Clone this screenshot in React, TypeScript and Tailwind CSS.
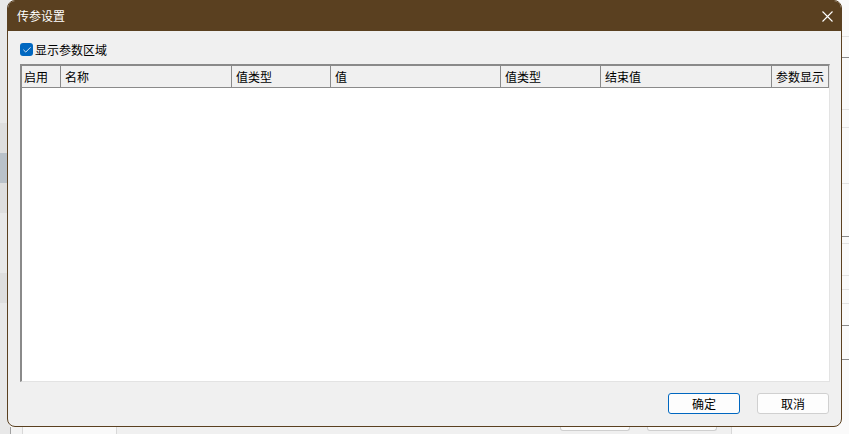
import { Check } from 'lucide-react';

const cols = [
  { label: '启用', w: 'w-[39px]', pad: 'pl-[2px]' },
  { label: '名称', w: 'w-[171px]', pad: 'pl-[4px]' },
  { label: '值类型', w: 'w-[99px]', pad: 'pl-[4px]' },
  { label: '值', w: 'w-[170px]', pad: 'pl-[4px]' },
  { label: '值类型', w: 'w-[100px]', pad: 'pl-[4px]' },
  { label: '结束值', w: 'w-[171px]', pad: 'pl-[4px]' },
  { label: '参数显示', w: 'w-[57px]', pad: 'pl-[4px]' },
];

const BackLeft = () => (
  <div className="flex w-[10px] flex-col bg-[#e8e8e8]">
    <div className="h-[123px]" />
    <div className="h-[30px] bg-[#dedede]" />
    <div className="h-[30px] bg-[#b9c1c9]" />
    <div className="h-[30px] bg-[#dedede]" />
    <div className="h-[60px]" />
    <div className="h-[30px] bg-[#dedede]" />
    <div className="flex-1" />
  </div>
);

const BackRight = () => (
  <div className="flex w-[12px] flex-col bg-[#fafafa]">
    <div className="h-[37px] border-b border-[#e3e3e3]" />
    <div className="h-[21px] border-b border-[#8a8a8a]" />
    <div className="h-[52px] border-b border-[#e3e3e3]" />
    <div className="h-[18px] border-b border-[#e3e3e3]" />
    <div className="h-[56px] border-b border-[#e3e3e3]" />
    <div className="h-[53px] border-b border-[#8a8a8a]" />
    <div className="h-[7px] border-b border-[#e3e3e3]" />
    <div className="h-[32px] border-b border-[#e3e3e3]" />
    <div className="h-[14px] border-b border-[#e3e3e3]" />
    <div className="h-[14px] border-b border-[#e3e3e3]" />
    <div className="h-[22px] border-b border-[#8a8a8a]" />
    <div className="h-[34px] border-b border-[#8a8a8a]" />
    <div className="flex-1" />
  </div>
);

const BackBottom = () => (
  <div className="flex h-[7px] items-stretch">
    <div className="w-[10px] bg-[#e8e8e8]" />
    <div className="w-[12px] border-l border-[#a0a0a0] bg-[#f3f3f3]" />
    <div className="w-[94px] border-l border-[#d8d8d8] bg-[#f9f9f9]" />
    <div className="flex w-[615px] items-start gap-[17px] border-l border-[#d8d8d8] bg-[#f0f0f0] pl-[443px]">
      <div className="h-[4px] w-[70px] rounded-b-[3px] border border-t-0 border-[#cfcfcf] bg-[#fbfbfb]" />
      <div className="h-[4px] w-[70px] rounded-b-[3px] border border-t-0 border-[#cfcfcf] bg-[#fbfbfb]" />
    </div>
    <div className="flex-1 border-l border-[#d8d8d8] bg-[#fafafa]" />
  </div>
);

const CloseIcon = () => (
  <svg width="11" height="11" viewBox="0 0 11 11" fill="none">
    <path d="M0.5 0.5 L10.5 10.5 M10.5 0.5 L0.5 10.5" stroke="white" strokeWidth="1.1" />
  </svg>
);

export default function App() {
  return (
    <div
      className="relative h-[434px] w-[849px] overflow-hidden bg-[#fafafa] text-[12px] text-black"
      style={{ fontFamily: '"Noto Sans CJK SC", "Microsoft YaHei", sans-serif' }}
    >
      <div className="flex h-full flex-col">
        <div className="flex flex-1">
          <BackLeft />
          <div className="flex-1" />
          <BackRight />
        </div>
        <BackBottom />
      </div>

      {/* dialog */}
      <div className="absolute top-0 left-[7px] flex h-[427px] w-[835px] flex-col overflow-hidden rounded-[8px] border border-[#5a4020] bg-[#f0f0f0]">
        <div className="flex h-[30px] shrink-0 items-center justify-between bg-[#5a4020] pr-[8px] pl-[9px] text-white">
          <span className="leading-none">传参设置</span>
          <CloseIcon />
        </div>

        <div className="flex items-center gap-[2px] pt-[12px] pl-[12px]">
          <div className="flex h-[13px] w-[13px] items-center justify-center rounded-[3px] bg-[#0067c0]">
            <Check size={10} strokeWidth={2} className="text-white" />
          </div>
          <span className="leading-[13px]">显示参数区域</span>
        </div>

        <div className="mt-[8px] ml-[12px] flex h-[318px] w-[810px] flex-col border-t-2 border-r border-b border-l-2 border-t-[#8a8a8a] border-r-[#e3e3e3] border-b-[#e3e3e3] border-l-[#8a8a8a] bg-white">
          <div className="flex h-[22px] border-b border-[#8a8a8a] bg-[#f0f0f0]">
            {cols.map((c, i) => (
              <div
                key={i}
                className={`${c.w} ${c.pad} flex items-center border-r border-[#8a8a8a] leading-none`}
              >
                {c.label}
              </div>
            ))}
          </div>
          <div className="flex-1" />
        </div>

        <div className="mt-[11px] flex justify-end gap-[17px] pr-[12px]">
          <button className="flex h-[21px] w-[72px] items-center justify-center rounded-[3px] border border-[#0067c0] bg-[#fdfdfd] leading-none">
            确定
          </button>
          <button className="flex h-[21px] w-[72px] items-center justify-center rounded-[3px] border border-[#d0d0d0] bg-[#fdfdfd] leading-none">
            取消
          </button>
        </div>
      </div>
    </div>
  );
}
